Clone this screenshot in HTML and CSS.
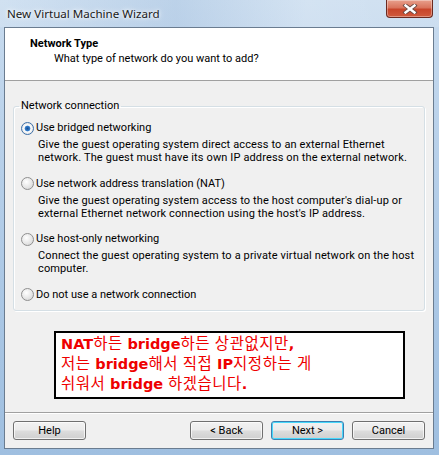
FILE: index.html
```html
<!DOCTYPE html>
<html>
<head>
<meta charset="utf-8">
<link rel="stylesheet" href="styles.css">
</head>
<body>
<div class="window">
  <div class="titlebar">
    <span class="title">New Virtual Machine Wizard</span>
    <button class="close" aria-label="Close">
      <svg width="16" height="10" viewBox="0 0 16 10"><path d="M3.5 1.5 L12.5 8.5 M12.5 1.5 L3.5 8.5" stroke="#6b4a44" stroke-width="4.2" stroke-linecap="square"/><path d="M3.5 1.5 L12.5 8.5 M12.5 1.5 L3.5 8.5" stroke="#ffffff" stroke-width="2.4" stroke-linecap="square"/></svg>
    </button>
  </div>
  <div class="client">
    <div class="header">
      <div class="h-title">Network Type</div>
      <div class="h-sub">What type of network do you want to add?</div>
    </div>
    <div class="content">
      <fieldset class="group">
        <legend>Network connection</legend>
        <div class="option">
          <div class="radio-row"><span class="radio checked"></span><span>Use bridged networking</span></div>
          <div class="desc">Give the guest operating system direct access to an external Ethernet<br>network. The guest must have its own IP address on the external network.</div>
        </div>
        <div class="option">
          <div class="radio-row"><span class="radio"></span><span>Use network address translation (NAT)</span></div>
          <div class="desc">Give the guest operating system access to the host computer's dial-up or<br>external Ethernet network connection using the host's IP address.</div>
        </div>
        <div class="option">
          <div class="radio-row"><span class="radio"></span><span>Use host-only networking</span></div>
          <div class="desc">Connect the guest operating system to a private virtual network on the host<br>computer.</div>
        </div>
        <div class="option last">
          <div class="radio-row"><span class="radio"></span><span>Do not use a network connection</span></div>
        </div>
      </fieldset>
      <div class="note">
        <div><b>NAT</b>하든 <b>bridge</b>하든 상관없지만<b>,</b></div>
        <div>저는 <b>bridge</b>해서 직접 <b>IP</b>지정하는 게</div>
        <div>쉬워서 <b>bridge</b> 하겠습니다<b>.</b></div>
      </div>
    </div>
    <div class="footer">
      <button class="btn">Help</button>
      <div class="spacer"></div>
      <button class="btn">&lt; Back</button>
      <button class="btn default">Next &gt;</button>
      <button class="btn">Cancel</button>
    </div>
  </div>
</div>
</body>
</html>
```

FILE: styles.css
```css
* { box-sizing: border-box; }
html, body { margin: 0; padding: 0; }
body {
  width: 439px;
  height: 455px;
  overflow: hidden;
  font-family: Roboto, "Liberation Sans", sans-serif;
  font-size: 11px;
  color: #000;
}
.window {
  width: 439px;
  height: 455px;
  display: flex;
  flex-direction: column;
  background: linear-gradient(180deg, #c9dcef 0%, #b9d1ea 30%, #a9c6e4 70%, #9fbfe0 100%);
  padding: 0 5px 6px 4px;
}
.titlebar {
  height: 27px;
  display: flex;
  align-items: flex-start;
  justify-content: space-between;
  background: linear-gradient(90deg, rgba(255,255,255,0.15), rgba(150,180,215,0.25) 40%, rgba(255,255,255,0.2) 70%, rgba(255,255,255,0.1));
  margin: 0 -5px 0 -4px;
  padding: 0 6px 0 7px;
}
.title {
  font-family: "Noto Sans", sans-serif;
  font-size: 11.6px;
  line-height: 27px;
  color: #1a1a1a;
  text-shadow: 0 0 6px #ffffff, 0 0 3px #ffffff;
}
.close {
  width: 47px;
  height: 18px;
  margin: 0;
  padding: 0;
  border: 1px solid #6b2a20;
  border-top: none;
  border-radius: 0 0 4px 4px;
  background: linear-gradient(180deg, #e8a08c 0%, #d9745c 45%, #c8452a 55%, #d05a3c 100%);
  box-shadow: inset 0 0 0 1px rgba(255,255,255,0.35);
  display: flex;
  align-items: center;
  justify-content: center;
}
.client {
  flex: 1;
  display: flex;
  flex-direction: column;
  background: #f0f0f0;
  border: 1px solid #6a7c90;
}
.header {
  height: 53px;
  flex: none;
  background: #ffffff;
  border-bottom: 1px solid #a0a0a0;
  padding: 8px 0 0 25px;
}
.h-title {
  font-weight: bold;
  font-size: 11px;
  line-height: 15px;
}
.h-sub {
  padding-left: 24px;
  line-height: 16px;
}
.content {
  flex: 1;
  padding: 0 8px;
}
.group {
  margin: 18px 0 0 0;
  padding: 8px 0 8px 7px;
  border: 1px solid #d5dfe5;
  border-radius: 3px;
  box-shadow: inset 1px 1px 0 #ffffff, 1px 1px 0 #ffffff;
  min-width: 0;
}
.group legend {
  padding: 0 2px;
  margin-left: -2px;
  line-height: 14px;
}
.option { margin-bottom: 12.5px; }
.option.last { margin-bottom: 0; }
.radio-row {
  display: flex;
  align-items: center;
  gap: 2px;
  line-height: 14px;
}
.radio {
  width: 13px;
  height: 13px;
  border-radius: 50%;
  border: 1px solid #8f8f8f;
  background: radial-gradient(circle at 40% 35%, #ffffff 0%, #e6e6e6 55%, #cfcfcf 100%);
  flex: none;
}
.radio.checked {
  background: radial-gradient(circle at 50% 50%, #1a4f92 0%, #2f77c6 28%, #7fb3e6 36%, #ffffff 42%, #e6e6e6 70%, #d0d0d0 100%);
  border-color: #3c6fa8;
}
.desc {
  padding-left: 17px;
  margin-top: 3px;
  line-height: 13px;
  letter-spacing: 0.13px;
  white-space: nowrap;
}
.note {
  margin: 20px 0 0 41px;
  width: 351px;
  height: 68px;
  border: 2px solid #000;
  background: #fff;
  color: #ee0000;
  font-family: "Liberation Sans", "Noto Sans CJK KR", sans-serif;
  font-size: 15.5px;
  line-height: 19px;
  letter-spacing: 0.5px;
  padding: 1px 0 0 5px;
  white-space: nowrap;
}
.note b { font-family: "DejaVu Sans", sans-serif; font-weight: bold; font-size: 14.5px; letter-spacing: 0; }
.footer {
  flex: none;
  display: flex;
  gap: 8px;
  align-items: center;
  border-top: 1px solid #a0a0a0;
  box-shadow: inset 0 1px 0 #ffffff;
  padding: 8px 8px 8px 8px;
  margin: 0;
}
.spacer { flex: 1; }
.btn {
  width: 73px;
  height: 19px;
  margin: 0;
  padding: 0;
  font-family: Roboto, sans-serif;
  font-size: 11px;
  line-height: 17px;
  color: #000;
  border: 1px solid #707070;
  border-radius: 3px;
  background: linear-gradient(180deg, #f2f2f2 0%, #ebebeb 48%, #dddddd 52%, #cfcfcf 100%);
  box-shadow: inset 0 0 0 1px rgba(255,255,255,0.7);
}
.btn.default {
  border-color: #3c7fb1;
  box-shadow: inset 0 0 0 1px #48d8fb;
}
```
